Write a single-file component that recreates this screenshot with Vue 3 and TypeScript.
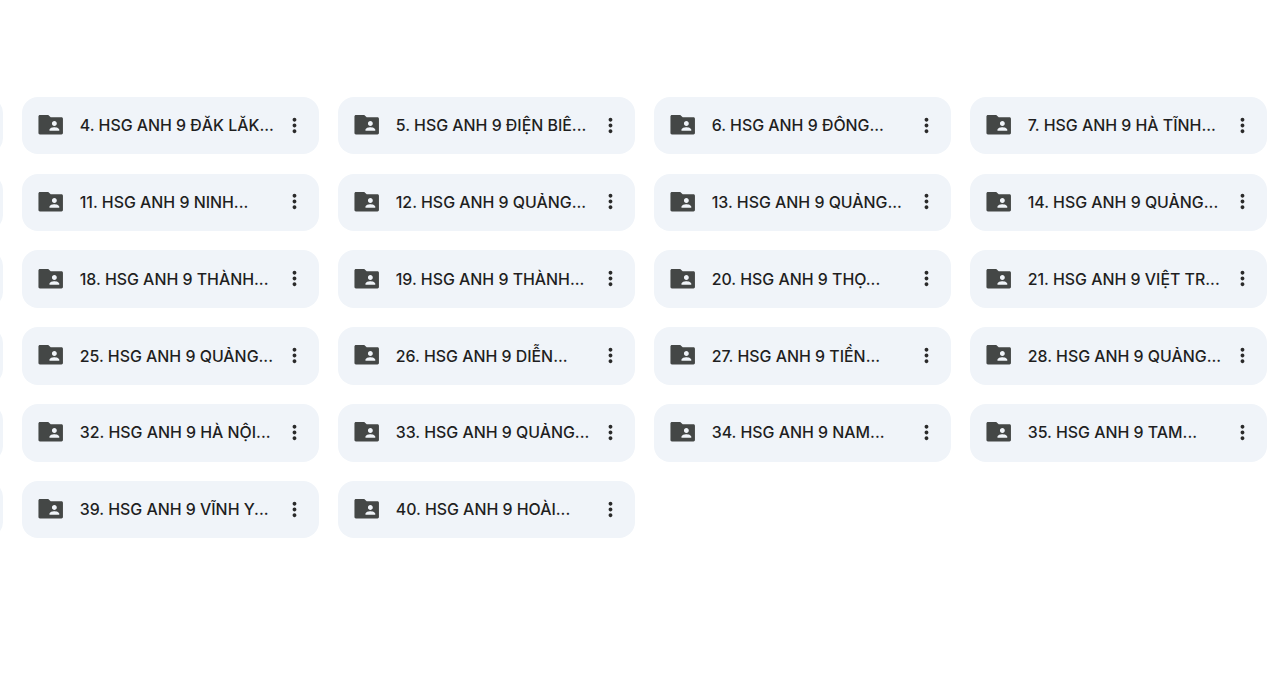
<script setup lang="ts">
const names: string[] = [
  '', '4. HSG ANH 9 ĐĂK LĂK...', '5. HSG ANH 9 ĐIỆN BIÊ...', '6. HSG ANH 9 ĐÔNG...', '7. HSG ANH 9 HÀ TĨNH...',
  '', '11. HSG ANH 9 NINH...', '12. HSG ANH 9 QUẢNG...', '13. HSG ANH 9 QUẢNG...', '14. HSG ANH 9 QUẢNG...',
  '', '18. HSG ANH 9 THÀNH...', '19. HSG ANH 9 THÀNH...', '20. HSG ANH 9 THỌ...', '21. HSG ANH 9 VIỆT TR...',
  '', '25. HSG ANH 9 QUẢNG...', '26. HSG ANH 9 DIỄN...', '27. HSG ANH 9 TIỀN...', '28. HSG ANH 9 QUẢNG...',
  '', '32. HSG ANH 9 HÀ NỘI...', '33. HSG ANH 9 QUẢNG...', '34. HSG ANH 9 NAM...', '35. HSG ANH 9 TAM...',
  '', '39. HSG ANH 9 VĨNH Y...', '40. HSG ANH 9 HOÀI...',
]
</script>

<template>
  <main class="page">
    <div class="grid">
      <div v-for="(name, i) in names" :key="i" class="card">
        <template v-if="name">
          <svg class="folder" viewBox="0 0 24 24" fill="#444746">
            <path fill-rule="evenodd" d="M20.8 6H12l-2-2H3.2C2.5 4 2 4.5 2 5.2v13.6c0 .7.5 1.2 1.2 1.2h17.6c.7 0 1.2-.5 1.2-1.2V7.2C22 6.5 21.5 6 20.8 6zM15 9c1.1 0 2 .9 2 2s-.9 2-2 2-2-.9-2-2 .9-2 2-2zm4 8h-8v-1c0-1.33 2.67-2 4-2s4 .67 4 2v1z" />
          </svg>
          <span class="name">{{ name }}</span>
          <svg class="more" viewBox="0 0 24 24" fill="#2a2a2a">
            <path d="M12 8c1.1 0 2-.9 2-2s-.9-2-2-2-2 .9-2 2 .9 2 2 2zm0 2c-1.1 0-2 .9-2 2s.9 2 2 2 2-.9 2-2-.9-2-2-2zm0 6c-1.1 0-2 .9-2 2s.9 2 2 2 2-.9 2-2-.9-2-2-2z" />
          </svg>
        </template>
      </div>
    </div>
  </main>
</template>

<style>
html, body { background: #fff; overflow: hidden; }
</style>

<style scoped>
.page {
  height: 700px;
  overflow: hidden;
  padding-top: 96.8px;
  box-sizing: border-box;
}
.grid {
  display: grid;
  grid-template-columns: repeat(5, 296.8px);
  grid-auto-rows: 57.6px;
  gap: 19.2px;
  margin-left: -293.6px;
}
.card {
  display: flex;
  align-items: center;
  background: #f0f4f9;
  border-radius: 16px;
  padding: 0 12.8px 0 13.2px;
  font-family: Inter, Roboto, sans-serif;
  font-size: 15.9px;
  font-weight: 500;
  line-height: 20px;
  color: #1f1f1f;
}
.folder {
  flex: none;
  width: 29.4px;
  height: 29.4px;
  margin-bottom: 1.6px;
}
.name {
  flex: 1;
  min-width: 0;
  margin-left: 14.8px;
  margin-top: 1.2px;
  white-space: nowrap;
}
.more {
  flex: none;
  width: 23px;
  height: 23px;
  margin-bottom: 1px;
}
</style>
